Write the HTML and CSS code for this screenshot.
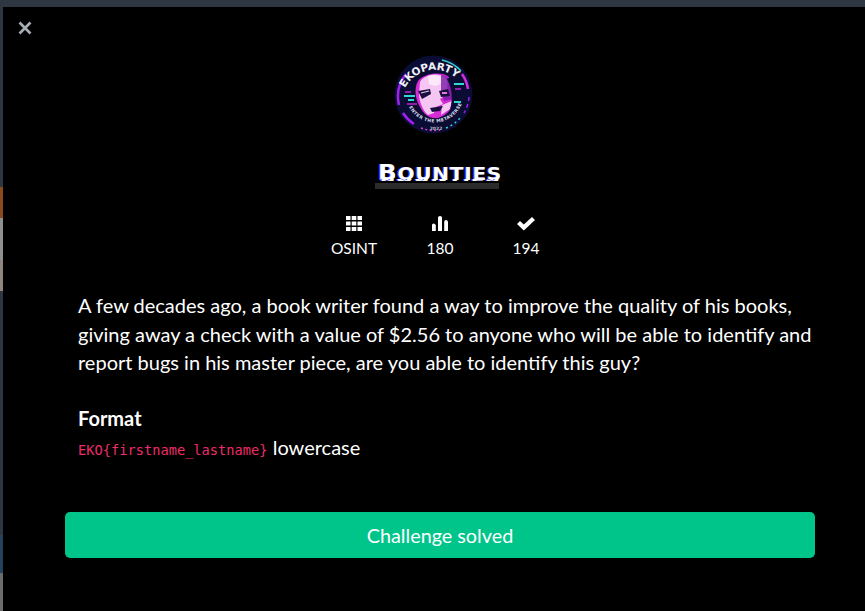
FILE: index.html
```html
<!DOCTYPE html>
<html lang="en">
<head>
    <meta charset="UTF-8">
    <meta name="viewport" content="width=device-width, initial-scale=1.0">
    <title>Bounties</title>
    <link rel="stylesheet" href="styles.css">
</head>
<body>
    <div class="backdrop">
        <div class="strip">
            <span class="strip-orange"></span>
            <span class="strip-grey"></span>
            <span class="strip-pink"></span>
            <span class="strip-slate"></span>
            <span class="strip-blue"></span>
            <span class="strip-grey2"></span>
        </div>
        <div class="modal">
            <button class="close" aria-label="Close">
                <svg width="14" height="14" viewBox="0 0 14 14"><path d="M1.5 1.5L12.5 12.5M12.5 1.5L1.5 12.5" stroke="#a8aeb6" stroke-width="2.6" fill="none"/></svg>
            </button>

            <svg class="logo" width="80" height="80" viewBox="0 0 80 80">
                <defs>
                    <path id="arc-top" d="M11 33A33 33 0 0 1 65 26"/>
                    <path id="arc-bottom" d="M15 52A29 29 0 0 0 68 48"/>
                </defs>
                <circle cx="39.500" cy="39.500" r="39" fill="#0a0c34"/>
                <!-- ring dashes -->
                <path d="M5 50A36 36 0 0 1 12 19" stroke="#a21ff0" stroke-width="2.500" fill="none"/>
                <path d="M48 5A36 36 0 0 1 67 16" stroke="#2fd8d0" stroke-width="1.500" fill="none"/>
                <path d="M68 19A36 36 0 0 1 74 34" stroke="#d22fe0" stroke-width="2.500" fill="none"/>
                <path d="M75 42A36 36 0 0 1 70 58" stroke="#a21ff0" stroke-width="1.500" stroke-dasharray="4 3" fill="none"/>
                <path d="M9 58A36 36 0 0 0 20 69" stroke="#a21ff0" stroke-width="2.500" fill="none"/>
                <path d="M27 73A36 36 0 0 0 46 75" stroke="#e040d0" stroke-width="1.500" stroke-dasharray="2 2.500" fill="none"/>
                <path d="M52 73A36 36 0 0 0 66 63" stroke="#2fd8d0" stroke-width="1.500" stroke-dasharray="2 3" fill="none"/>
                <!-- face -->
                <path d="M24 26C30 18 48 16 55 22C59 28 57 36 60 44C60 52 54 60 44 63C36 64 30 60 26 52C21 44 20 33 24 26Z" fill="#d62bd6"/>
                <path d="M26 27C30 19 46 17 52 23C55 28 53 34 52 40L46 44L49 49L42 52L40 58L34 60C29 56 25 46 25 38Z" fill="#f6c6f2"/>
                <path d="M34 21C41 19 48 21 49 25C46 31 41 32 35 29Z" fill="#fde8fb"/>
                <path d="M47 20C52 20 56 24 58 30L60 44L50 46L47 35Z" fill="#7a1aa8" opacity="0.8"/>
                <path d="M24 36L36 34L37 39L28 44Z" fill="#1a1040"/>
                <path d="M27 38L35 36" stroke="#e9c8f0" stroke-width="1.200"/>
                <path d="M45 36L54 34L56 41L47 42Z" fill="#1a1040"/>
                <path d="M48 38H53" stroke="#ff80e8" stroke-width="1.800"/>
                <path d="M48 50L58 46L56 54L47 60Z" fill="#f6c6f2"/>
                <path d="M36 53L49 51L46 56L38 57Z" fill="#1a1040"/>
                <path d="M56 22C63 32 64 50 57 60L55 58C59 48 59 34 53 24Z" fill="#0a0c34"/>
                <!-- glitch bars -->
                <path d="M10 41H21M14 45H20M60 29H70M60 47H67" stroke="#2fd8d0" stroke-width="1.800"/>
                <path d="M61 34H67M11 37H17M13 49H23" stroke="#c026d3" stroke-width="1.500"/>
                <text class="logo-name"><textPath href="#arc-top" textLength="60">EKOPARTY</textPath></text>
                <text class="logo-sub"><textPath href="#arc-bottom" textLength="66">ENTER THE METAVERSE</textPath></text>
                <text class="logo-year" x="42" y="75">2022</text>
            </svg>

            <div class="title-wrap">
                <h1 class="title" data-text="Bounties">Bounties</h1>
            </div>

            <div class="stats">
                <div class="stat">
                    <svg width="16" height="15" viewBox="0 0 16 15"><path fill="#fff" d="M0 0h4.500v4H0zM5.700 0h4.600v4H5.700zM11.500 0H16v4h-4.500zM0 5.500h4.500v4H0zM5.700 5.500h4.600v4H5.700zM11.500 5.500H16v4h-4.500zM0 11h4.500v4H0zM5.700 11h4.600v4H5.700zM11.500 11H16v4h-4.500z"/></svg>
                    <span>OSINT</span>
                </div>
                <div class="stat">
                    <svg width="16" height="15" viewBox="0 0 16 15"><path fill="#fff" d="M0 9Q0 7.500 1.500 7.500T3.800 9V15H0zM6 1.500Q6 0 8 0T10 1.500V15H6zM12.200 6Q12.200 4 14 4T16 6V15H12.200z"/></svg>
                    <span>180</span>
                </div>
                <div class="stat">
                    <svg width="18" height="15" viewBox="0 0 18 15"><path fill="#fff" d="M0 8L3 5L6.800 8.500L15 1L18 4L6.800 14.500Z"/></svg>
                    <span>194</span>
                </div>
            </div>

            <div class="desc">
                <p>A few decades ago, a book writer found a way to improve the quality of his books, giving away a check with a value of $2.56 to anyone who will be able to identify and report bugs in his master piece, are you able to identify this guy?</p>
                <h2>Format</h2>
                <p class="format"><code>EKO{firstname_lastname}</code> lowercase</p>
            </div>

            <button class="solved">Challenge solved</button>
        </div>
    </div>
</body>
</html>
```
FILE: styles.css
```css
* {
    margin: 0;
    padding: 0;
    box-sizing: border-box;
}

html, body {
    height: 100%;
    overflow: hidden;
}

body {
    font-family: Lato, "Open Sans", sans-serif;
    background: #2e3641;
    color: #fff;
}

.backdrop {
    display: flex;
    height: 611px;
    width: 877px;
    padding-top: 7px;
}

.strip {
    width: 3px;
    flex: none;
    display: flex;
    flex-direction: column;
    padding-top: 180px;
}

.strip span { display: block; }
.strip-orange { height: 31px; background: #8a4a1c; }
.strip-grey { height: 42px; background: #8f8f8f; }
.strip-pink { height: 31px; background: #8f8480; }
.strip-slate { height: 244px; background: #2e3641; }
.strip-blue { height: 38px; background: #24425c; }
.strip-grey2 { height: 38px; background: #6c6c6c; }

.modal {
    position: relative;
    flex: 1;
    background: #000;
    display: flex;
    flex-direction: column;
    align-items: center;
    padding: 48px 62px 0;
}

.close {
    position: absolute;
    left: 15px;
    top: 14px;
    background: none;
    border: none;
    line-height: 0;
}

.logo {
    margin-right: 12px;
    display: block;
    flex: none;
}

.logo-name {
    font-family: "DejaVu Sans", sans-serif;
    font-size: 10.500px;
    font-weight: 700;
    fill: #f0f0f6;
}

.logo-sub {
    font-family: "DejaVu Sans", sans-serif;
    font-size: 4.500px;
    font-weight: 700;
    fill: #d8dce8;
}

.logo-year {
    font-family: "DejaVu Sans", sans-serif;
    font-size: 4.500px;
    font-weight: 700;
    fill: #b8bcc8;
    text-anchor: middle;
}

.title-wrap {
    margin-top: 26px;
    height: 32px;
    width: 124px;
    position: relative;
    text-align: center;
}

/* grey bar under the title */
.title-wrap::after {
    content: "";
    position: absolute;
    left: -3px;
    right: 3px;
    top: 22px;
    height: 6px;
    background: #2b2b2b;
}

.title {
    position: relative;
    z-index: 1;
    font-family: "DejaVu Sans", sans-serif;
    text-transform: uppercase;
    font-size: 18px;
    font-weight: 700;
    line-height: 24px;
    letter-spacing: 0.6px;
    white-space: nowrap;
    transform: scaleX(1.12);
    text-shadow: -1px 0 #3c3cff;
}

.title::first-letter {
    font-size: 22px;
}

/* clipped copy, the glitch slice just below the word */
.title::after {
    content: attr(data-text);
    position: absolute;
    left: 0;
    right: 0;
    top: 4px;
    clip-path: inset(14px 0 8px 0);
}

.stats {
    margin-top: 23px;
    display: flex;
    width: 258px;
    justify-content: space-between;
    font-size: 15.500px;
}

.stat {
    width: 86px;
    display: flex;
    flex-direction: column;
    align-items: center;
    gap: 8px;
    height: 42px;
}

.desc {
    width: 100%;
    margin-top: 33px;
    padding: 0 0 0 13px;
    font-size: 20px;
    line-height: 28.500px;
    color: #fff;
}

.desc h2 {
    margin-top: 27px;
    font-size: 20px;
    font-weight: 700;
}

.format {
    margin-top: 1px;
}

.format code {
    font-family: "DejaVu Sans Mono", monospace;
    font-size: 13.700px;
    color: #ee2c68;
}

.solved {
    margin-top: 47px;
    width: 100%;
    height: 46px;
    flex: none;
    border: none;
    border-radius: 5px;
    background: #00c58b;
    color: #fff;
    font-family: Lato, "Open Sans", sans-serif;
    font-size: 19.800px;
}
```
